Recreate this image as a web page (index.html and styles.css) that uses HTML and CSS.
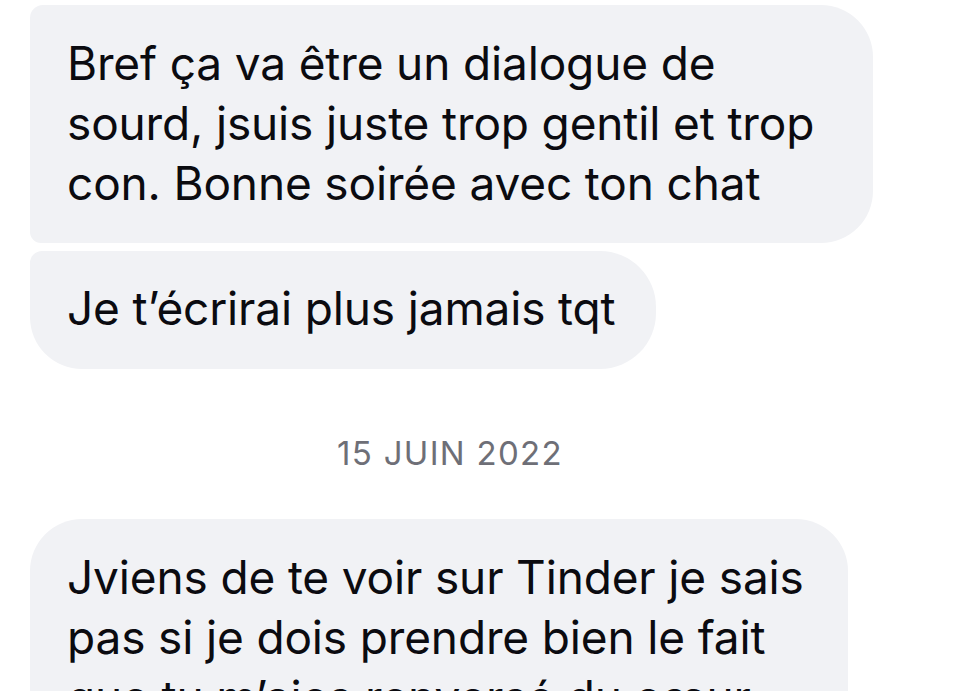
FILE: index.html
```html
<!DOCTYPE html>
<html lang="fr">
<head>
<meta charset="utf-8">
<title>Messages</title>
<link rel="stylesheet" href="styles.css">
</head>
<body>
<main class="thread">
  <div class="group">
    <div class="bubble b1 mid">Bref ça va être un dialogue de<br>sourd, jsuis juste trop gentil et trop<br>con. Bonne soirée avec ton chat</div>
    <div class="bubble b2 last">Je t’écrirai plus jamais tqt</div>
  </div>
  <div class="date">15 JUIN 2022</div>
  <div class="group">
    <div class="bubble b3 first">Jviens de te voir sur Tinder je sais<br>pas si je dois prendre bien le fait<br>que tu m’aies renversé du cœur<br>ou pas</div>
  </div>
</main>
</body>
</html>
```
FILE: styles.css
```css
html, body {
  margin: 0;
  padding: 0;
  background: #ffffff;
  overflow: hidden;
  height: 691px;
}
body {
  font-family: Inter, "Liberation Sans", sans-serif;
  color: #0b0b10;
}
.thread {
  display: flex;
  flex-direction: column;
  padding: 5px 0 0 30px;
}
.group {
  display: flex;
  flex-direction: column;
  align-items: flex-start;
  gap: 8px;
}
.bubble {
  box-sizing: border-box;
  background: #f1f2f5;
  font-size: 46px;
  line-height: 60px;
  padding: 28px 30px 30px 37px;
  white-space: nowrap;
  border-radius: 13px 52px 52px 11px;
  letter-spacing: -0.15px;
}
.b1 { width: 843px; }
.b2 { width: 626px; padding-top: 27px; padding-bottom: 31px; border-radius: 12px 56px 56px 52px; }
.b3 { width: 818px; padding-top: 28px; border-radius: 52px 52px 52px 12px; }
.date {
  align-self: center;
  margin: 64px 0 46px -83px;
  font-size: 33px;
  line-height: 40px;
  color: #6e6f77;
  letter-spacing: 1.3px;
}
```
